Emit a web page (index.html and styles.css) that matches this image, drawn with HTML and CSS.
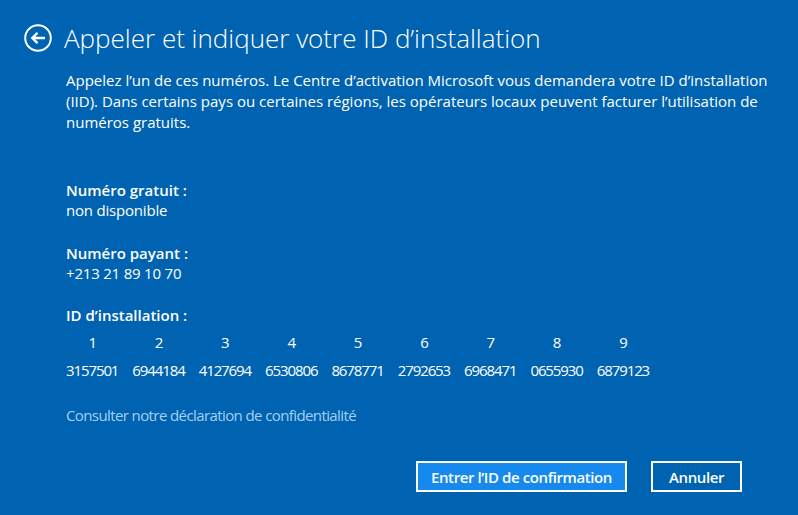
FILE: index.html
```html
<!DOCTYPE html>
<html>
  <head>
    <title>Appeler et indiquer votre ID d’installation</title>
    <link rel="stylesheet" href="styles.css">
  </head>
  <body>
    <div class="page">
      <div class="header">
        <button class="back" aria-label="Retour">
          <svg width="28" height="28" viewBox="0 0 28 28">
            <circle cx="14" cy="14" r="12.8" fill="none" stroke="#fff" stroke-width="2"/>
            <path d="M21 14H8.5M13.5 8.8L8.3 14l5.2 5.2" fill="none" stroke="#fff" stroke-width="2.4"/>
          </svg>
        </button>
        <h1>Appeler et indiquer votre ID d’installation</h1>
      </div>
      <div class="content">
        <p class="intro">Appelez l’un de ces numéros. Le Centre d’activation Microsoft vous demandera votre ID d’installation (IID). Dans certains pays ou certaines régions, les opérateurs locaux peuvent facturer l’utilisation de numéros gratuits.</p>

        <div class="field first">
          <div class="label">Numéro gratuit :</div>
          <div class="value">non disponible</div>
        </div>
        <div class="field second">
          <div class="label">Numéro payant :</div>
          <div class="value">+213 21 89 10 70</div>
        </div>
        <div class="field third">
          <div class="label">ID d’installation :</div>
          <div class="iid">
            <span class="num">1</span><span class="num">2</span><span class="num">3</span>
            <span class="num">4</span><span class="num">5</span><span class="num">6</span>
            <span class="num">7</span><span class="num">8</span><span class="num">9</span>
            <span>3157501</span><span>6944184</span><span>4127694</span>
            <span>6530806</span><span>8678771</span><span>2792653</span>
            <span>6968471</span><span>0655930</span><span>6879123</span>
          </div>
        </div>

        <a class="privacy" href="#">Consulter notre déclaration de confidentialité</a>
      </div>
      <div class="actions">
        <button class="btn primary">Entrer l’ID de confirmation</button>
        <button class="btn cancel">Annuler</button>
      </div>
    </div>
  </body>
</html>
```

FILE: styles.css
```css
* {
  box-sizing: border-box;
}
body {
  margin: 0;
  background-color: #0063b1;
  color: #fff;
  font-family: "Open Sans", "Noto Sans", sans-serif;
  font-size: 15px;
  line-height: 20px;
}
.page {
  width: 798px;
  height: 515px;
  display: flex;
  flex-direction: column;
}
.header {
  display: flex;
  align-items: center;
  gap: 12px;
  padding: 22px 0 0 24px;
}
.back {
  width: 28px;
  height: 28px;
  padding: 0;
  border: none;
  background: none;
  display: flex;
}
h1 {
  margin: 0;
  font-size: 26px;
  font-weight: 300;
  line-height: 32px;
}
.content {
  padding: 16px 0 0 66px;
}
.intro {
  margin: 0;
  max-width: 710px;
  line-height: 21px;
}
.field.first {
  margin-top: 47px;
}
.field.second {
  margin-top: 23px;
}
.field.third {
  margin-top: 22px;
}
.label {
  font-weight: 600;
}
.value {
  letter-spacing: -0.2px;
}
.iid {
  display: grid;
  grid-template-columns: repeat(9, auto);
  justify-content: start;
  column-gap: 14px;
  row-gap: 8px;
  margin-top: 7px;
  text-align: center;
  letter-spacing: -1.1px;
}
.privacy {
  display: inline-block;
  margin-top: 25px;
  color: #a4cff2;
  text-decoration: none;
  letter-spacing: -0.6px;
}
.actions {
  display: flex;
  justify-content: flex-end;
  gap: 24px;
  padding: 0 56px 0 0;
  margin-top: auto;
  margin-bottom: 23px;
}
.btn {
  height: 31px;
  padding: 0 13px;
  border: 2px solid #fff;
  background-color: transparent;
  color: #fff;
  font-family: inherit;
  font-size: 15px;
  font-weight: 600;
  letter-spacing: -0.4px;
}
.btn.primary {
  background-color: #1589ee;
}
.btn.cancel {
  padding: 0 16px;
}
```
